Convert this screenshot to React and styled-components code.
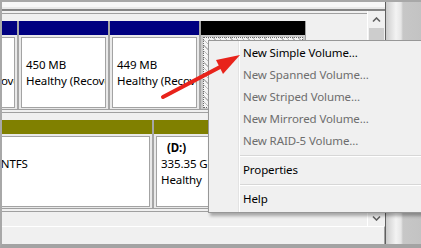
import React from "react";
import styled, { createGlobalStyle } from "styled-components";

const GlobalStyle = createGlobalStyle`
  html, body {
    margin: 0;
    padding: 0;
    background: #f0f0f0;
  }
  body {
    font-family: "Segoe UI", "Noto Sans", "Liberation Sans", sans-serif;
    font-size: 11.5px;
    letter-spacing: -0.1px;
    color: #000;
  }
`;

// 디스크 / 파티션 데이터 (왼쪽은 스크롤되어 잘려 있음)
const disks = [
  {
    shift: 74,
    parts: [
      { color: "#000080", width: 89, lines: ["", "529 MB", "Healthy (Recovery Partition)"] },
      { color: "#000080", width: 91, lines: ["", "450 MB", "Healthy (Recovery Partition)"] },
      { color: "#000080", width: 91, lines: ["", "449 MB", "Healthy (Recovery Partition)"] },
      { color: "#000000", width: 107, free: true, lines: [] },
    ],
  },
  {
    shift: 65,
    parts: [
      { color: "#808000", width: 215, lines: ["(C:)", "146.48 GB NTFS", "Healthy"] },
      { color: "#808000", width: 260, indent: true, lines: ["(D:)", "335.35 GB NTFS", "Healthy"] },
    ],
  },
  { shift: 0, parts: [] },
];

const menuItems = [
  { label: "New Simple Volume...", enabled: true },
  { label: "New Spanned Volume..." },
  { label: "New Striped Volume..." },
  { label: "New Mirrored Volume..." },
  { label: "New RAID-5 Volume..." },
  { sep: true },
  { label: "Properties", enabled: true },
  { sep: true },
  { label: "Help", enabled: true },
];

function Chevron({ down }) {
  return (
    <svg width="9" height="6" viewBox="0 0 9 6">
      <path
        d={down ? "M1 1.5 L4.5 5 L8 1.5" : "M1 4.5 L4.5 1 L8 4.5"}
        fill="none"
        stroke="#606060"
        strokeWidth="1.6"
      />
    </svg>
  );
}

function App() {
  return (
    <Page>
      <GlobalStyle />
      <Frame>
        <Window>
          <TopStrip />
          <Pane>
            <Content>
              {disks.map((disk, i) => (
                <DiskRow key={i}>
                  <Track $shift={disk.shift}>
                    {disk.parts.map((p, j) => (
                      <Partition key={j} $w={p.width} $last={p.free}>
                        <Header $color={p.color} />
                        <Body $selected={p.free}>
                          {p.free ? (
                            <FreeBox />
                          ) : (
                            <Box>
                              {p.lines.map((l, k) => (
                                <Line key={k} $bold={k === 0} $indent={k === 0 && p.indent}>
                                  {l || "\u00a0"}
                                </Line>
                              ))}
                            </Box>
                          )}
                        </Body>
                      </Partition>
                    ))}
                  </Track>
                </DiskRow>
              ))}
            </Content>
            <VScroll>
              <ScrollBtn>
                <Chevron />
              </ScrollBtn>
              <ScrollTrack>
                <Thumb />
              </ScrollTrack>
              <ScrollBtn>
                <Chevron down />
              </ScrollBtn>
            </VScroll>
          </Pane>
          <BottomPanel />
        </Window>
        <RightEdge />
      </Frame>

      <Menu>
        {menuItems.map((m, i) =>
          m.sep ? <Separator key={i} /> : <Item key={i} $enabled={m.enabled}>{m.label}</Item>
        )}
      </Menu>

      {/* 빨간 화살표 */}
      <ArrowLayer width="421" height="248" viewBox="0 0 421 248">
        <line x1="163" y1="97" x2="222" y2="66" stroke="#e8231b" strokeWidth="4" strokeLinecap="round" />
        <polygon points="240,55 216,60 223,74" fill="#e8231b" />
      </ArrowLayer>
    </Page>
  );
}

export default App;

const Page = styled.div`
  position: relative;
  width: 421px;
  height: 248px;
  overflow: hidden;
`;

const Frame = styled.div`
  box-sizing: border-box;
  width: 421px;
  height: 248px;
  display: flex;
  border-top: 2px solid #a8a8a8;
  border-left: 2px solid #a8a8a8;
  border-bottom: 4px solid #a3a3a3;
`;

const Window = styled.div`
  width: 383px;
  display: flex;
  flex-direction: column;
  background: #f0f0f0;
`;

const TopStrip = styled.div`
  height: 7px;
  background: linear-gradient(#f8f8f8 0 5px, #e9e9e9 5px);
  border-bottom: 2px solid #858585;
`;

const Pane = styled.div`
  height: 215px;
  display: flex;
  overflow: hidden;
`;

const Content = styled.div`
  flex: 1;
  overflow: hidden;
  padding-top: 2px;
  background: #f0f0f0;
`;

const DiskRow = styled.div`
  border-top: 1px solid #a0a0a0;
  border-bottom: 1px solid #a0a0a0;
  margin-bottom: 2px;
  padding-top: 7px;
  height: 88px;
`;

const Track = styled.div`
  display: flex;
  margin-left: -${(p) => p.$shift}px;
  height: 100%;
`;

const Partition = styled.div`
  box-sizing: border-box;
  flex: none;
  width: ${(p) => p.$w}px;
  display: flex;
  flex-direction: column;
  & + & {
    border-left: 2px solid #a6a6a6;
  }
  border-right: ${(p) => (p.$last ? "1px solid #a0a0a0" : "none")};
`;

const Header = styled.div`
  height: 14px;
  background: ${(p) => p.$color};
`;

const Body = styled.div`
  flex: 1;
  padding: 2px 2px 1px;
  background: ${(p) => (p.$selected ? "#c9c9c9" : "#e9e9e9")};
`;

const Box = styled.div`
  box-sizing: border-box;
  height: 71px;
  border: 1px solid #a3a3a3;
  background: #fff;
  padding: 3px 4px;
  overflow: hidden;
  white-space: nowrap;
  line-height: 16px;
`;

const Line = styled.div`
  font-weight: ${(p) => (p.$bold ? 700 : 400)};
  padding-left: ${(p) => (p.$indent ? 6 : 0)}px;
`;

const FreeBox = styled.div`
  box-sizing: border-box;
  height: 71px;
  border: 1px dotted #6a6a6a;
  background: repeating-linear-gradient(45deg, #f4f4f4 0 3px, #bcbcbc 3px 4px);
`;

const VScroll = styled.div`
  width: 17px;
  display: flex;
  flex-direction: column;
  background: #f0f0f0;
  border-left: 1px solid #fff;
`;

const ScrollBtn = styled.div`
  height: 17px;
  display: flex;
  align-items: center;
  justify-content: center;
`;

const ScrollTrack = styled.div`
  flex: 1;
  padding: 0 1px;
`;

const Thumb = styled.div`
  height: 120px;
  background: #cdcdcd;
`;

const BottomPanel = styled.div`
  flex: 1;
  background: #f0f0f0;
  border-top: 1px solid #fff;
  border-right: 1px solid #a0a0a0;
`;

const RightEdge = styled.div`
  flex: 1;
  border-left: 1px solid #5f5f5f;
  background: linear-gradient(
    to right,
    #cbcbcb 0,
    #dcdcdc 4px,
    #f3f3f3 10px,
    #e6e6e6 15px,
    #c7c7c7 17px,
    #c3c3c3 100%
  );
`;

const Menu = styled.div`
  position: absolute;
  left: 208px;
  top: 40px;
  width: 240px;
  padding: 1px 0 2px;
  background: #f0f0f0;
  border: 1px solid #979797;
  box-shadow: 2px 3px 3px rgba(0, 0, 0, 0.3);
  &::before {
    content: "";
    position: absolute;
    left: 29px;
    top: 0;
    bottom: 0;
    width: 1px;
    background: #e3e3e3;
    border-right: 1px solid #fff;
  }
`;

const Item = styled.div`
  height: 22px;
  line-height: 22px;
  padding-left: 34px;
  color: ${(p) => (p.$enabled ? "#000" : "#6d6d6d")};
  white-space: nowrap;
`;

const Separator = styled.div`
  height: 1px;
  margin: 3px 2px 2px 31px;
  background: #d7d7d7;
  border-bottom: 1px solid #fff;
`;

const ArrowLayer = styled.svg`
  position: absolute;
  left: 0;
  top: 0;
  pointer-events: none;
`;
